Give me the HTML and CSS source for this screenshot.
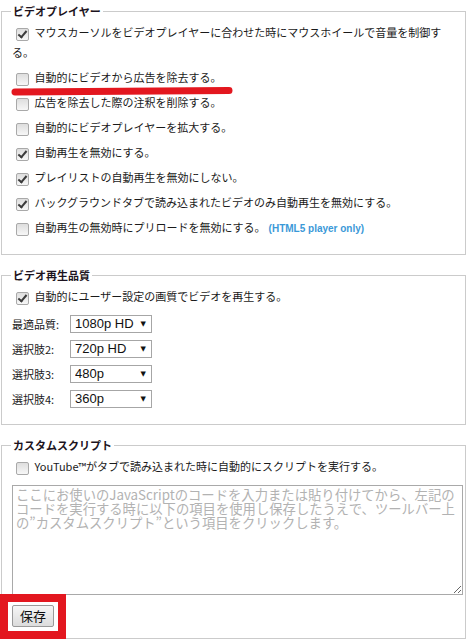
FILE: index.html
```html
<!DOCTYPE html>
<html lang="ja">
<head>
<meta charset="UTF-8">
<meta name="viewport" content="width=device-width, initial-scale=1.0">
<title>オプション</title>
<link rel="stylesheet" href="styles.css">
</head>
<body>
<div class="options">

  <fieldset class="group group-player">
    <legend>ビデオプレイヤー</legend>
    <label class="opt"><input type="checkbox" class="cb" checked> マウスカーソルをビデオプレイヤーに合わせた時にマウスホイールで音量を制御する。</label>
    <label class="opt marked"><input type="checkbox" class="cb"> 自動的にビデオから広告を除去する。<svg class="underline" width="222" height="12" viewBox="0 0 222 12"><path d="M4 7 L218 5.5" stroke="#e3171f" stroke-width="7" stroke-linecap="round" fill="none"/></svg></label>
    <label class="opt"><input type="checkbox" class="cb"> 広告を除去した際の注釈を削除する。</label>
    <label class="opt"><input type="checkbox" class="cb"> 自動的にビデオプレイヤーを拡大する。</label>
    <label class="opt"><input type="checkbox" class="cb" checked> 自動再生を無効にする。</label>
    <label class="opt"><input type="checkbox" class="cb" checked> プレイリストの自動再生を無効にしない。</label>
    <label class="opt"><input type="checkbox" class="cb" checked> バックグラウンドタブで読み込まれたビデオのみ自動再生を無効にする。</label>
    <label class="opt"><input type="checkbox" class="cb"> 自動再生の無効時にプリロードを無効にする。<span class="note">(HTML5 player only)</span></label>
  </fieldset>

  <fieldset class="group group-quality">
    <legend>ビデオ再生品質</legend>
    <label class="opt"><input type="checkbox" class="cb" checked> 自動的にユーザー設定の画質でビデオを再生する。</label>
    <div class="quality">
      <span class="quality-label">最適品質:</span>
      <span class="select"><select><option>1080p HD</option><option>720p HD</option><option>480p</option><option>360p</option></select></span>
    </div>
    <div class="quality">
      <span class="quality-label">選択肢2:</span>
      <span class="select"><select><option>720p HD</option><option>480p</option><option>360p</option></select></span>
    </div>
    <div class="quality">
      <span class="quality-label">選択肢3:</span>
      <span class="select"><select><option>480p</option><option>360p</option></select></span>
    </div>
    <div class="quality">
      <span class="quality-label">選択肢4:</span>
      <span class="select"><select><option>360p</option><option>240p</option></select></span>
    </div>
  </fieldset>

  <fieldset class="group group-script">
    <legend>カスタムスクリプト</legend>
    <label class="opt"><input type="checkbox" class="cb"> YouTube™がタブで読み込まれた時に自動的にスクリプトを実行する。</label>
    <textarea class="script" placeholder="ここにお使いのJavaScriptのコードを入力または貼り付けてから、左記のコードを実行する時に以下の項目を使用し保存したうえで、ツールバー上の”カスタムスクリプト”という項目をクリックします。"></textarea>
    <div class="save">
      <button type="button">保存</button>
      <span class="save-mark"></span>
    </div>
  </fieldset>

</div>
</body>
</html>
```

FILE: styles.css
```css
* { box-sizing: border-box; }

body {
  margin: 0;
  background: #fff;
  color: #1a1a1a;
  font-family: "Noto Sans CJK JP", sans-serif;
  font-size: 11px;
}

.options {
  width: 465px;
  margin: 1px 0 0 1px;
}

/* Groups */
.group {
  min-width: 0;
  margin: 0 0 10px;
  padding: 1px 10px 13px;
  border: 1px solid #cbcbcb;
}
.group-player { padding-bottom: 15px; }
.group-script { padding-bottom: 11px; margin-bottom: 0; }

legend {
  margin-left: -1px;
  padding: 0 2px;
  font-size: 11px;
  font-weight: 700;
  line-height: 20px;
  color: #1c1320;
}

/* Checkbox rows */
.opt {
  display: block;
  position: relative;
  line-height: 20px;
  margin-bottom: 5px;
}
.opt:last-child { margin-bottom: 0; }

.cb {
  -webkit-appearance: none;
  appearance: none;
  position: relative;
  width: 13px;
  height: 13px;
  margin: 0 3px 0 4px;
  vertical-align: middle;
  border: 1px solid #a9a9a9;
  border-radius: 2px;
  background: linear-gradient(#dedede, #f7f7f7);
}
.cb:checked::after {
  content: '';
  position: absolute;
  left: 3px;
  top: 0;
  width: 3px;
  height: 7px;
  border: solid #3b3b3b;
  border-width: 0 2px 2px 0;
  transform: rotate(40deg);
}

.note {
  margin-left: 3px;
  font-family: "Liberation Sans", Arial, sans-serif;
  font-size: 10px;
  font-weight: 700;
  color: #3b99d8;
}

/* red annotation under the ad option */
.underline {
  position: absolute;
  left: -1px;
  top: 18px;
}

/* Quality selects */
.quality {
  display: flex;
  align-items: center;
  height: 25px;
}

.quality-label {
  width: 58px;
  font-size: 11px;
}

.select {
  position: relative;
  display: block;
}
.select select {
  -webkit-appearance: none;
  appearance: none;
  display: block;
  width: 82px;
  height: 18px;
  margin: 0;
  padding: 0 0 0 4px;
  border: 1px solid #a6a6a6;
  border-radius: 0;
  background: #fff;
  color: #111;
  font-family: "Liberation Sans", Arial, sans-serif;
  font-size: 13px;
}
.select::after {
  content: '▼';
  position: absolute;
  right: 6px;
  top: 50%;
  transform: translateY(-50%);
  font-family: "DejaVu Sans", sans-serif;
  font-size: 7px;
  color: #111;
  pointer-events: none;
}

/* Custom script */
.script {
  display: block;
  box-sizing: content-box;
  width: 100%;
  height: 104px;
  margin: 9px 0 0;
  padding: 2px 3px;
  border: 1px solid #a9a9a9;
  font-family: "Noto Sans CJK JP", sans-serif;
  font-size: 13.333px;
  line-height: 14px;
  color: #333;
}
.script::placeholder { color: #b2b2b2; }

.save {
  position: relative;
  display: flex;
  margin-top: 10px;
}
.save button {
  height: 22px;
  padding: 0 7px;
  border: 1px solid #9a9a9a;
  border-radius: 2px;
  background: linear-gradient(#f6f6f6, #dcdcdc);
  color: #111;
  font-family: "Noto Sans CJK JP", sans-serif;
  font-size: 13px;
  line-height: 20px;
}

/* red annotation around the save button */
.save-mark {
  position: absolute;
  left: -12px;
  top: -11px;
  width: 66px;
  height: 45px;
  border: 8px solid #e3171f;
  pointer-events: none;
}
```
